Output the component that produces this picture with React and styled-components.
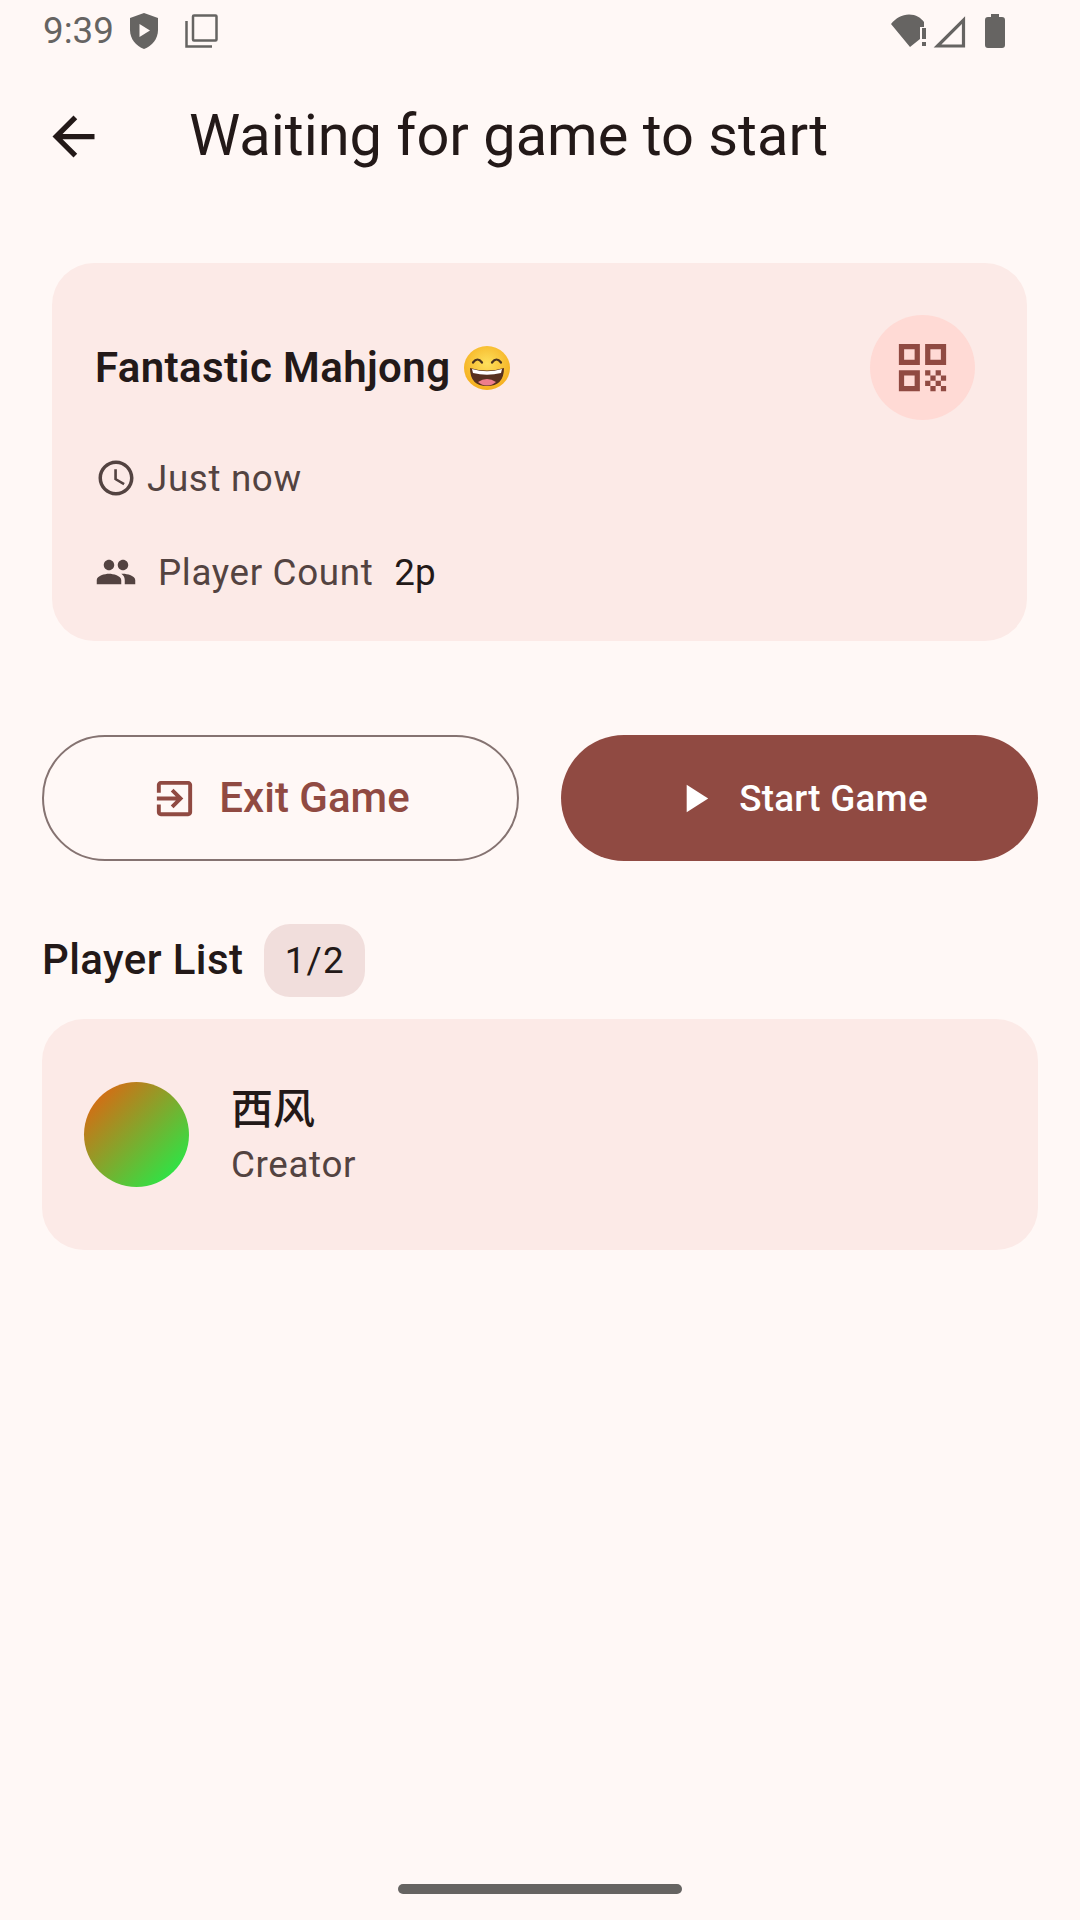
import React from 'react';
import styled, { createGlobalStyle } from 'styled-components';

const Global = createGlobalStyle`
  html, body { margin: 0; padding: 0; background: #fff8f6; }
  * { box-sizing: border-box; }
`;

const Page = styled.div`
  width: 1080px;
  height: 1920px;
  display: flex;
  flex-direction: column;
  background: #fff8f6;
  color: #231918;
  font-family: Roboto, "Noto Sans CJK SC", sans-serif;
  overflow: hidden;
`;

const StatusBar = styled.div`
  height: 62px;
  padding: 0 75px 0 43px;
  display: flex;
  align-items: center;
  justify-content: space-between;
  color: #666462;
`;
const StatusGroup = styled.div`
  display: flex;
  align-items: center;
`;
const Clock = styled.span`
  font-size: 36.75px;
  line-height: 62px;
  margin-right: 15px;
`;

const AppBar = styled.header`
  height: 148px;
  display: flex;
  align-items: center;
  padding-left: 42px;
`;
const BackIcon = styled.svg`
  width: 63px;
  height: 63px;
  margin-right: 84px;
  fill: #231918;
  display: block;
`;
const Title = styled.h1`
  margin: 0;
  font-size: 57.75px;
  font-weight: 400;
  line-height: 1;
`;

const Content = styled.main`
  padding: 0 42px;
  display: flex;
  flex-direction: column;
`;

const InfoCard = styled.section`
  margin: 53px 11px 0 10px;
  height: 378px;
  padding: 52px 52px 47px 43px;
  border-radius: 42px;
  background: #fceae7;
  display: flex;
  flex-direction: column;
`;
const CardHead = styled.div`
  display: flex;
  align-items: center;
  justify-content: space-between;
  height: 105px;
`;
const GameName = styled.div`
  display: flex;
  align-items: center;
  gap: 14px;
  font-size: 42px;
  font-weight: 600;
  line-height: 1;
  letter-spacing: 0.4px;
`;
const QrButton = styled.div`
  width: 105px;
  height: 105px;
  border-radius: 50%;
  background: #ffdad5;
  display: flex;
  align-items: center;
  justify-content: center;
`;
const InfoRow = styled.div`
  height: 42px;
  margin-top: ${p => p.$top}px;
  display: flex;
  align-items: center;
  color: #534341;
  font-size: 36.75px;
  letter-spacing: 0.65px;
`;
const RowIcon = styled.svg`
  width: 42px;
  height: 42px;
  margin-right: ${p => p.$gap}px;
  fill: #534341;
  flex: none;
`;
const Value = styled.span`
  margin-left: 21px;
  color: #231918;
  letter-spacing: 0;
`;

const Actions = styled.div`
  margin-top: 94px;
  display: grid;
  grid-template-columns: 477px 477px;
  justify-content: space-between;
`;
const ActionButton = styled.button`
  height: 126px;
  border-radius: 63px;
  padding: 0;
  font-family: inherit;
  font-weight: 500;
  display: flex;
  align-items: center;
  justify-content: center;
  border: ${p => (p.$filled ? 'none' : '2px solid #857371')};
  background: ${p => (p.$filled ? '#904a42' : 'transparent')};
  color: ${p => (p.$filled ? '#ffffff' : '#904a42')};
  font-size: ${p => (p.$filled ? '36.75px' : '42px')};
  letter-spacing: ${p => (p.$filled ? '0.26px' : '0')};
`;
const ButtonIcon = styled.svg`
  width: 47px;
  height: 47px;
  margin-right: ${p => p.$gap}px;
  fill: currentColor;
`;
const ButtonLabel = styled.span`
  position: relative;
  top: ${p => p.$lift}px;
`;

const ListHeader = styled.div`
  margin-top: 63px;
  height: 73px;
  display: flex;
  align-items: center;
  gap: 21px;
`;
const ListTitle = styled.h2`
  margin: 0 0 2px;
  font-size: 42px;
  font-weight: 500;
  line-height: 1;
  letter-spacing: 0.4px;
`;
const CountChip = styled.span`
  width: 101px;
  height: 73px;
  border-radius: 26px;
  background: #f1dedc;
  display: flex;
  align-items: center;
  justify-content: center;
  font-size: 36.75px;
  letter-spacing: 1.3px;
`;

const PlayerCard = styled.section`
  margin-top: 22px;
  height: 231px;
  padding: 0 42px;
  border-radius: 42px;
  background: #fceae7;
  display: flex;
  align-items: center;
  gap: 42px;
`;
const Avatar = styled.div`
  width: 105px;
  height: 105px;
  border-radius: 50%;
  background: linear-gradient(135deg, #f0590c 0%, #11f84e 100%);
`;
const PlayerText = styled.div`
  display: flex;
  flex-direction: column;
`;
const PlayerName = styled.div`
  font-size: 42px;
  font-weight: 500;
  line-height: 61px;
`;
const PlayerRole = styled.div`
  font-size: 36.75px;
  line-height: 50px;
  color: #534341;
  letter-spacing: 0.65px;
`;

const HomeBar = styled.div`
  margin: auto auto 26px;
  width: 284px;
  height: 10px;
  border-radius: 5px;
  background: #666462;
`;

const Shield = () => (
  <svg width="30" height="36" viewBox="0 0 30 36">
    <path fill="#666462" d="M15 0 L29 5 V17 C29 26 23 33 15 36 C7 33 1 26 1 17 V5 Z" />
    <path fill="#fff8f6" d="M10.500 11 L21 17.500 L10.500 24 Z" />
  </svg>
);
const CopyIcon = () => (
  <svg width="33" height="34" viewBox="0 0 33 34" fill="none" stroke="#666462" strokeWidth="2.500" style={{ marginLeft: 26 }}>
    <rect x="8" y="1.500" width="23.500" height="25" rx="1" />
    <path d="M1.500 7 V32.500 H27" />
  </svg>
);
const Wifi = () => (
  <svg width="42" height="34" viewBox="0 0 42 34">
    <path fill="#666462" d="M0 10 C5 4 11 0.500 18 0.500 C25 0.500 30 4 33 8 V13 H29 V25 L19 33 Z" />
    <rect x="31" y="14" width="4" height="11" fill="#666462" />
    <rect x="31" y="28" width="4" height="4" fill="#666462" />
  </svg>
);
const Signal = () => (
  <svg width="33" height="33" viewBox="0 0 33 33" fill="none" stroke="#666462" strokeWidth="3.200">
    <path d="M30.500 5 V31 H4.500 Z" />
  </svg>
);
const Battery = () => (
  <svg width="20" height="34" viewBox="0 0 20 34" style={{ marginLeft: 19 }}>
    <path fill="#666462" d="M6 0 H14 V3 H17 Q20 3 20 6 V31 Q20 34 17 34 H3 Q0 34 0 31 V6 Q0 3 3 3 H6 Z" />
  </svg>
);
const Qr = () => (
  <svg width="63" height="63" viewBox="0 0 24 24" fill="#904a42">
    <path d="M3,11h8V3H3V11z M5,5h4v4H5V5z M3,21h8v-8H3V21z M5,15h4v4H5V15z M13,3v8h8V3H13z M19,9h-4V5h4V9z M19,19h2v2h-2V19z M13,13h2v2h-2V13z M15,15h2v2h-2V15z M13,17h2v2h-2V17z M15,19h2v2h-2V19z M17,17h2v2h-2V17z M17,13h2v2h-2V13z M19,15h2v2h-2V15z" />
  </svg>
);
const Grin = () => (
  <svg width="46" height="44" viewBox="0 0 46 44">
    <defs>
      <radialGradient id="face" cx="50%" cy="40%" r="60%">
        <stop offset="0%" stopColor="#fde05c" />
        <stop offset="100%" stopColor="#f5ae1e" />
      </radialGradient>
    </defs>
    <ellipse cx="23" cy="22" rx="23" ry="22" fill="url(#face)" />
    <path d="M9 16.500 Q13.500 10.500 18 16.500 M28 16.500 Q32.500 10.500 37 16.500" fill="none" stroke="#4a3320" strokeWidth="2.200" strokeLinecap="round" />
    <path d="M6 22 Q23 27 40 22 Q40 40 23 40 Q6 40 6 22 Z" fill="#57301f" />
    <path d="M8 23 Q23 27.500 38 23 L37 27 Q23 30.500 9 27 Z" fill="#fff" />
    <path d="M14 36 Q23 30 32 36 Q28 39.500 23 39.500 Q18 39.500 14 36 Z" fill="#ee7d8c" />
  </svg>
);

export default function App() {
  return (
    <Page>
      <Global />
      <StatusBar>
        <StatusGroup>
          <Clock>9:39</Clock>
          <Shield />
          <CopyIcon />
        </StatusGroup>
        <StatusGroup>
          <Wifi />
          <Signal />
          <Battery />
        </StatusGroup>
      </StatusBar>
      <AppBar>
        <BackIcon viewBox="0 0 24 24">
          <path d="M20 11H7.830l5.590-5.590L12 4l-8 8 8 8 1.410-1.410L7.830 13H20v-2z" />
        </BackIcon>
        <Title>Waiting for game to start</Title>
      </AppBar>
      <Content>
        <InfoCard>
          <CardHead>
            <GameName>Fantastic Mahjong <Grin /></GameName>
            <QrButton><Qr /></QrButton>
          </CardHead>
          <InfoRow $top={37}>
            <RowIcon viewBox="0 0 24 24" $gap={10}>
              <path d="M11.990 2C6.470 2 2 6.480 2 12s4.470 10 9.990 10C17.520 22 22 17.520 22 12S17.520 2 11.990 2zM12 20c-4.420 0-8-3.580-8-8s3.580-8 8-8 8 3.580 8 8-3.580 8-8 8zm.500-13H11v6l5.250 3.150.750-1.230-4.500-2.670z" />
            </RowIcon>
            Just now
          </InfoRow>
          <InfoRow $top={52}>
            <RowIcon viewBox="0 0 24 24" $gap={21}>
              <path d="M16 11c1.660 0 2.990-1.340 2.990-3S17.660 5 16 5c-1.660 0-3 1.340-3 3s1.340 3 3 3zm-8 0c1.660 0 2.990-1.340 2.990-3S9.660 5 8 5C6.340 5 5 6.340 5 8s1.340 3 3 3zm0 2c-2.330 0-7 1.170-7 3.500V19h14v-2.500c0-2.330-4.670-3.500-7-3.500zm8 0c-.290 0-.620.020-.970.050 1.160.840 1.970 1.970 1.970 3.450V19h6v-2.500c0-2.330-4.670-3.500-7-3.500z" />
            </RowIcon>
            Player Count
            <Value>2p</Value>
          </InfoRow>
        </InfoCard>
        <Actions>
          <ActionButton>
            <ButtonIcon viewBox="0 0 24 24" $gap={21}>
              <path d="M10.090 15.590L11.500 17l5-5-5-5-1.410 1.410L12.670 11H3v2h9.670l-2.580 2.590zM19 3H5c-1.110 0-2 .900-2 2v4h2V5h14v14H5v-4H3v4c0 1.100.890 2 2 2h14c1.100 0 2-.900 2-2V5c0-1.100-.900-2-2-2z" />
            </ButtonIcon>
            <ButtonLabel $lift={-1}>Exit Game</ButtonLabel>
          </ActionButton>
          <ActionButton $filled>
            <ButtonIcon viewBox="0 0 24 24" $gap={21}>
              <path d="M8 5v14l11-7z" />
            </ButtonIcon>
            <ButtonLabel $lift={0}>Start Game</ButtonLabel>
          </ActionButton>
        </Actions>
        <ListHeader>
          <ListTitle>Player List</ListTitle>
          <CountChip>1/2</CountChip>
        </ListHeader>
        <PlayerCard>
          <Avatar />
          <PlayerText>
            <PlayerName>西风</PlayerName>
            <PlayerRole>Creator</PlayerRole>
          </PlayerText>
        </PlayerCard>
      </Content>
      <HomeBar />
    </Page>
  );
}
